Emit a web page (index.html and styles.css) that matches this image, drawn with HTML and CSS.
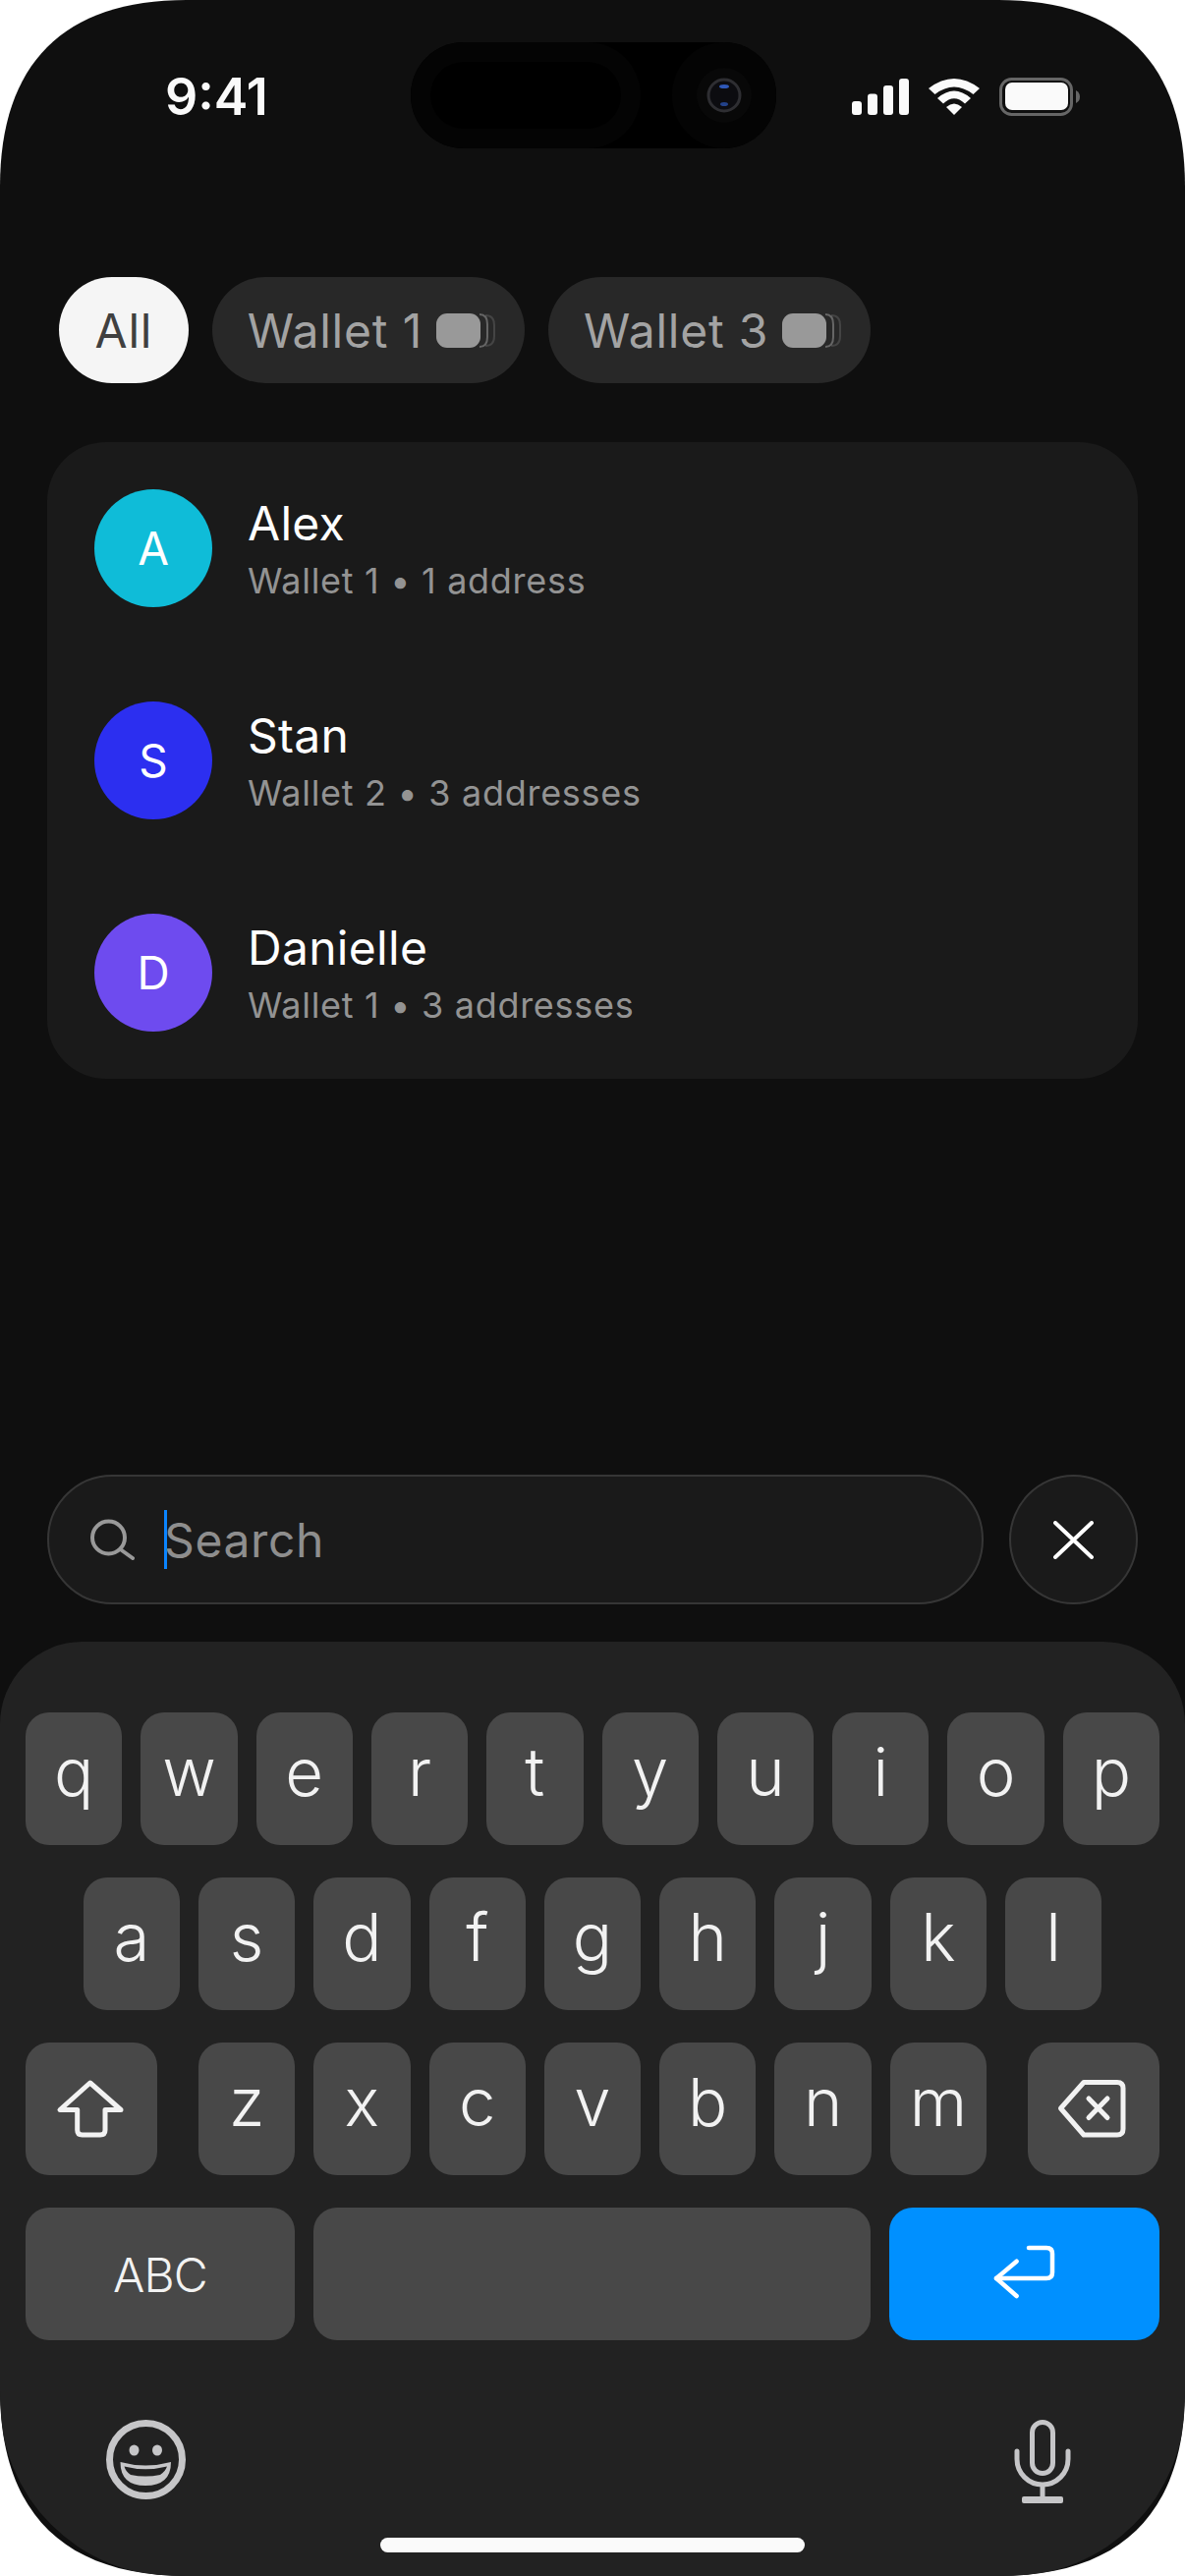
FILE: index.html
```html
<!DOCTYPE html>
<html lang="en">
<head>
    <meta charset="UTF-8">
    <meta name="viewport" content="width=device-width, initial-scale=1.0">
    <title>Search contacts</title>
    <link rel="stylesheet" href="styles.css">
</head>
<body>
    <div class="phone">

        <div class="status-bar">
            <span class="time">9:41</span>
            <div class="status-icons">
                <svg class="signal" width="58" height="37" viewBox="0 0 58 37">
                    <rect x="0" y="23" width="10" height="14" rx="3"/>
                    <rect x="16" y="15.5" width="10" height="21.5" rx="3"/>
                    <rect x="32" y="7" width="10" height="30" rx="3"/>
                    <rect x="48" y="0" width="10" height="37" rx="3"/>
                </svg>
                <svg class="wifi" width="52" height="37" viewBox="0 0 52 37">
                    <path d="M0 10 Q26 -10 52 10 L45.500 16 Q26 1 6.500 16 Z"/>
                    <path d="M9 20 Q26 5 43 20 L37 25.500 Q26 15 15 25.500 Z"/>
                    <path d="M18 29 Q26 22 34 29 L26 37 Z"/>
                </svg>
                <svg class="battery" width="82" height="39" viewBox="0 0 82 39">
                    <rect x="1.500" y="1.500" width="72" height="36" rx="11" fill="none" stroke="#666" stroke-width="3"/>
                    <rect x="6" y="5" width="64" height="28" rx="7" fill="#fafafa"/>
                    <path d="M78 13 Q82 15 82 19.500 Q82 24 78 26 Z" fill="#666"/>
                </svg>
            </div>
        </div>

        <div class="island">
            <div class="island-left"><div class="island-left-inner"></div></div>
            <div class="island-right">
                <svg width="58" height="58" viewBox="0 0 58 58">
                    <circle cx="29" cy="29" r="28" fill="#080808"/>
                    <circle cx="29" cy="29" r="16" fill="#0c0c10" stroke="#2e2e32" stroke-width="3"/>
                    <ellipse cx="29" cy="20" rx="5" ry="2" fill="#2f58b8"/>
                    <ellipse cx="29" cy="38" rx="4" ry="2" fill="#23428a"/>
                </svg>
            </div>
        </div>

        <div class="filters">
            <div class="pill pill-active">All</div>
            <div class="pill">
                Wallet 1
                <svg class="stack" width="60" height="35" viewBox="0 0 60 35">
                    <path d="M50 2 Q59 2 59 12 V23 Q59 33 50 33" fill="none" stroke="#444" stroke-width="2"/>
                    <path d="M44 1 Q52 1 52 11 V24 Q52 34 44 34" fill="none" stroke="#666" stroke-width="2"/>
                    <rect width="45" height="35" rx="11" fill="#999"/>
                </svg>
            </div>
            <div class="pill">
                Wallet 3
                <svg class="stack" width="60" height="35" viewBox="0 0 60 35">
                    <path d="M50 2 Q59 2 59 12 V23 Q59 33 50 33" fill="none" stroke="#444" stroke-width="2"/>
                    <path d="M44 1 Q52 1 52 11 V24 Q52 34 44 34" fill="none" stroke="#666" stroke-width="2"/>
                    <rect width="45" height="35" rx="11" fill="#999"/>
                </svg>
            </div>
        </div>

        <div class="contacts">
            <div class="contact">
                <div class="avatar avatar-cyan">A</div>
                <div class="contact-text">
                    <div class="contact-name">Alex</div>
                    <div class="contact-meta">Wallet 1 • 1 address</div>
                </div>
            </div>
            <div class="contact">
                <div class="avatar avatar-blue">S</div>
                <div class="contact-text">
                    <div class="contact-name">Stan</div>
                    <div class="contact-meta">Wallet 2 • 3 addresses</div>
                </div>
            </div>
            <div class="contact">
                <div class="avatar avatar-purple">D</div>
                <div class="contact-text">
                    <div class="contact-name">Danielle</div>
                    <div class="contact-meta">Wallet 1 • 3 addresses</div>
                </div>
            </div>
        </div>

        <div class="search-row">
            <div class="search-field">
                <svg class="search-icon" width="45" height="42" viewBox="0 0 45 42" fill="none" stroke="#999" stroke-width="4" stroke-linecap="round">
                    <circle cx="18.500" cy="19" r="16.500"/>
                    <path d="M30.500 31 L43 40"/>
                </svg>
                <span class="caret"></span>
                <span class="search-text">Search</span>
            </div>
            <div class="close-button">
                <svg width="41" height="39" viewBox="0 0 41 39" fill="none" stroke="#fff" stroke-width="4" stroke-linecap="round">
                    <path d="M2 2 L39 37 M39 2 L2 37"/>
                </svg>
            </div>
        </div>

        <div class="keyboard">
            <div class="key-row">
                <div class="key">q</div><div class="key">w</div><div class="key">e</div><div class="key">r</div><div class="key">t</div>
                <div class="key">y</div><div class="key">u</div><div class="key">i</div><div class="key">o</div><div class="key">p</div>
            </div>
            <div class="key-row">
                <div class="key">a</div><div class="key">s</div><div class="key">d</div><div class="key">f</div><div class="key">g</div>
                <div class="key">h</div><div class="key">j</div><div class="key">k</div><div class="key">l</div>
            </div>
            <div class="key-row key-row-split">
                <div class="key key-wide">
                    <svg width="134" height="135" viewBox="0 0 134 135" fill="none" stroke="#f2f2f2" stroke-width="5" stroke-linejoin="round">
                        <path d="M65.700 41 L35 68.500 H52.700 V89 Q52.700 94 57.700 94 H76 Q81 94 81 89 V68.500 H97 Z"/>
                    </svg>
                </div>
                <div class="key-group">
                    <div class="key">z</div><div class="key">x</div><div class="key">c</div><div class="key">v</div>
                    <div class="key">b</div><div class="key">n</div><div class="key">m</div>
                </div>
                <div class="key key-wide">
                    <svg width="134" height="135" viewBox="0 0 134 135" fill="none" stroke="#f2f2f2" stroke-width="5" stroke-linejoin="round" stroke-linecap="round">
                        <path d="M57 40.500 H91 Q97 40.500 97 46.500 V88 Q97 94 91 94 H57 L33.500 67 Z"/>
                        <path d="M62 57 L81 76.500 M81 57 L62 76.500"/>
                    </svg>
                </div>
            </div>
            <div class="key-row">
                <div class="key key-abc">ABC</div>
                <div class="key key-space"></div>
                <div class="key key-return">
                    <svg width="275" height="135" viewBox="0 0 275 135" fill="none" stroke="#fff" stroke-width="4.500" stroke-linecap="round" stroke-linejoin="round">
                        <path d="M129.600 54.700 L109 72 L129.600 90"/>
                        <path d="M109 72 H160 Q166 72 166 66 V47 Q166 41 160 41 H142"/>
                    </svg>
                </div>
            </div>

            <div class="keyboard-bottom">
                <svg width="81" height="81" viewBox="0 0 81 81">
                    <circle cx="40.500" cy="40.500" r="37" fill="none" stroke="#c6c6c8" stroke-width="7"/>
                    <ellipse cx="28.500" cy="31" rx="5" ry="5.500" fill="#c6c6c8"/>
                    <ellipse cx="52" cy="31" rx="5" ry="5.500" fill="#c6c6c8"/>
                    <path d="M14.500 43 Q40 50 66 43 Q66 67 40 67 Q14.500 67 14.500 43 Z" fill="#c6c6c8"/>
                    <path d="M18.500 47.500 Q40 53 62 47.500 Q60 53 55 56 Q40 59 25 56 Q20 53 18.500 47.500 Z" fill="#222"/>
                </svg>
                <svg width="58" height="85" viewBox="0 0 58 85" fill="none" stroke="#c6c6c8" stroke-width="5">
                    <rect x="18.500" y="2.500" width="21" height="52" rx="10.500"/>
                    <path d="M3 32 V40 A26 26 0 0 0 55 40 V32" stroke-linecap="round"/>
                    <path d="M29 66 V79"/>
                    <rect x="8" y="78" width="42" height="7" rx="2" fill="#c6c6c8" stroke="none"/>
                </svg>
            </div>
            <div class="home-indicator"></div>
        </div>

    </div>
</body>
</html>
```

FILE: styles.css
```css
* {
    box-sizing: border-box;
}

body {
    margin: 0;
    background-color: #fff;
    font-family: Inter, "Noto Sans", sans-serif;
}

.phone {
    position: relative;
    width: 1206px;
    height: 2622px;
    background-color: #0f0f0f;
    clip-path: path("M190 0 H1016 C1141.3 0 1206 64.7 1206 190 V2432 C1206 2557.3 1141.3 2622 1016 2622 H190 C64.7 2622 0 2557.3 0 2432 V190 C0 64.7 64.7 0 190 0 Z");
    display: flex;
    flex-direction: column;
}

/* status bar */

.status-bar {
    height: 196px;
    padding: 0 107px 0 168px;
    display: flex;
    align-items: center;
    justify-content: space-between;
    flex-shrink: 0;
}

.time {
    color: #fafafa;
    font-size: 52px;
    font-weight: 600;
}

.status-icons {
    display: flex;
    align-items: center;
    gap: 20px;
}

.signal,
.wifi {
    fill: #fafafa;
}

.island {
    position: absolute;
    top: 43px;
    left: 418px;
    width: 372px;
    height: 108px;
    background-color: #000;
    border-radius: 54px;
    display: flex;
    justify-content: space-between;
}

.island-left {
    width: 234px;
    border-radius: 54px;
    background-color: #040404;
    padding: 20px;
}

.island-left-inner {
    height: 100%;
    background-color: #000;
    border-radius: 36px;
}

.island-right {
    width: 106px;
    border-radius: 54px;
    background-color: #040404;
    display: flex;
    align-items: center;
    justify-content: center;
}

/* filter pills */

.filters {
    margin-top: 86px;
    padding-left: 60px;
    display: flex;
    gap: 24px;
}

.pill {
    height: 108px;
    padding: 0 30px 0 36px;
    border-radius: 54px;
    background-color: #282828;
    color: #a3a3a3;
    font-size: 48px;
    letter-spacing: 0.8px;
    display: flex;
    align-items: center;
    gap: 14px;
}

.pill-active {
    padding: 0 36.5px;
    background-color: #f5f5f5;
    color: #404040;
}

/* contact list */

.contacts {
    margin: 60px 48px 0;
    padding: 48px;
    border-radius: 60px;
    background-color: #1a1a1a;
    display: flex;
    flex-direction: column;
    gap: 96px;
}

.contact {
    display: flex;
    align-items: center;
    gap: 36px;
}

.avatar {
    width: 120px;
    height: 120px;
    border-radius: 50%;
    color: #fff;
    font-size: 46px;
    display: flex;
    align-items: center;
    justify-content: center;
    flex-shrink: 0;
}

.avatar-cyan {
    background-color: #0fbcd8;
}

.avatar-blue {
    background-color: #2c2ff0;
}

.avatar-purple {
    background-color: #6e4bef;
}

.contact-name {
    color: #fff;
    font-size: 48px;
    line-height: 58px;
    letter-spacing: 0.3px;
}

.contact-meta {
    margin-top: 7px;
    color: #939393;
    font-size: 36px;
    line-height: 44px;
    letter-spacing: 0.7px;
}

/* search */

.search-row {
    margin-top: auto;
    padding: 0 48px;
    display: flex;
    gap: 26px;
}

.search-field {
    flex: 1;
    height: 132px;
    padding-left: 42px;
    border: 2px solid #363636;
    border-radius: 66px;
    background-color: #1a1a1a;
    display: flex;
    align-items: center;
}

.search-icon {
    flex-shrink: 0;
}

.caret {
    width: 3px;
    height: 60px;
    margin-left: 30px;
    margin-right: -3px;
    background-color: #0a84ff;
}

.search-text {
    color: #8e8e8e;
    font-size: 48px;
    letter-spacing: 0.6px;
}

.close-button {
    width: 131px;
    height: 132px;
    border: 2px solid #363636;
    border-radius: 50%;
    background-color: #1a1a1a;
    display: flex;
    align-items: center;
    justify-content: center;
}

/* keyboard */

.keyboard {
    margin-top: 38px;
    height: 951px;
    padding: 72px 26px 0;
    background-color: #222;
    border-radius: 84px 84px 178px 178px;
    display: flex;
    flex-direction: column;
    gap: 33px;
    flex-shrink: 0;
}

.key-row {
    display: flex;
    justify-content: center;
    gap: 19px;
}

.key-row-split {
    justify-content: space-between;
    gap: 0;
}

.key-group {
    display: flex;
    gap: 19px;
}

.key {
    width: 98.3px;
    height: 135px;
    padding-bottom: 14px;
    border-radius: 24px;
    background-color: #484848;
    color: #f2f2f2;
    font-size: 67px;
    font-weight: 300;
    display: flex;
    align-items: center;
    justify-content: center;
    flex-shrink: 0;
}

.key-wide {
    width: 134px;
    padding: 0;
}

.key-abc {
    width: 274px;
    padding: 2px 0 0;
    font-size: 48px;
    letter-spacing: -0.8px;
}

.key-space {
    flex: 1;
}

.key-return {
    width: 275px;
    padding: 0;
    background-color: #0090ff;
}

.keyboard-bottom {
    margin-top: 48px;
    padding: 0 90px 0 82px;
    display: flex;
    align-items: flex-start;
    justify-content: space-between;
}

.home-indicator {
    width: 432px;
    height: 15px;
    margin: 2px auto 0;
    border-radius: 8px;
    background-color: #fafafa;
}
```
